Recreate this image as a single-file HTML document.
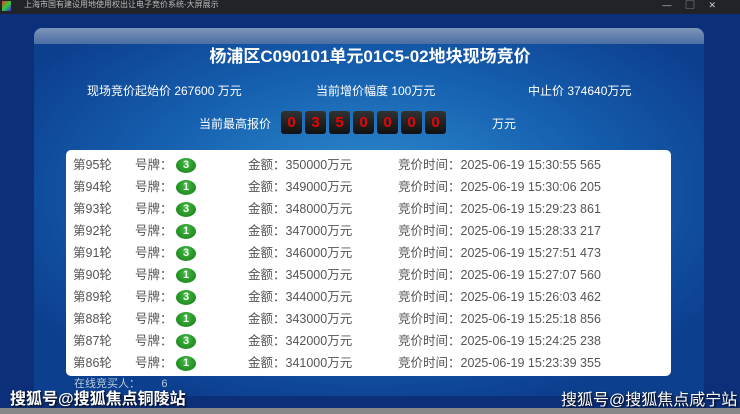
<!DOCTYPE html><html><head><meta charset="utf-8"><style>
*{margin:0;padding:0;box-sizing:border-box}
body{width:740px;height:414px;overflow:hidden;background:#0c2f7a;font-family:"Liberation Sans","Noto Sans CJK SC",sans-serif;position:relative}
.tb{position:absolute;left:0;top:0;width:740px;height:14px;background:#202428;color:#bbb;font-size:8px;line-height:10px;padding-left:24px}
.tb i{position:absolute;left:2px;top:1px;width:9px;height:10px;background:linear-gradient(135deg,#e33,#3c3,#33e)}
.panel{position:absolute;left:34px;top:28px;width:670px;height:368px;border-radius:8px 8px 0 0;background:radial-gradient(ellipse 60% 60% at 50% 45%,#2f8fd0,#1660b0 55%,#0d3f8f)}
.hd{position:absolute;left:34px;top:28px;width:670px;height:16px;border-radius:8px 8px 0 0;background:linear-gradient(#7d95b8,#4a6ea4)}
.t{position:absolute;color:#fff;white-space:nowrap}
.box{position:absolute;left:66px;top:150px;width:605px;height:226px;background:#fff;border-radius:5px}
.r{position:absolute;left:0;height:22px;width:605px;font-size:12.5px;color:#555;line-height:22px}
.r span{position:absolute}
.c{position:absolute;left:110px;top:4px;width:20px;height:15px;border-radius:50%;background:radial-gradient(circle at 50% 35%,#4b4,#137a13);color:#fff;font-weight:bold;font-size:11px;line-height:15px;text-align:center}
.d{display:inline-block;width:21px;height:23px;margin-right:3px;background:linear-gradient(#333,#111);border-radius:3px;color:#e00;font-size:15px;font-weight:bold;text-align:center;line-height:23px}
.bb{position:absolute;left:0;top:408px;width:740px;height:6px;background:#888}
.wm{position:absolute;color:#fff;font-size:16px;font-weight:bold;text-shadow:1px 1px 2px #000}
</style></head><body>
<div class="tb"><i></i>上海市国有建设用地使用权出让电子竞价系统-大屏展示<span style="position:absolute;right:10px;top:0;color:#ccc;font-size:9px;letter-spacing:14px">—▢✕</span></div>
<div class="panel"></div><div class="hd"></div>
<div class="t" style="left:0;width:740px;text-align:center;top:42px;font-size:17px;font-weight:bold">杨浦区C090101单元01C5-02地块现场竞价</div>
<div class="t" style="left:87px;top:82px;font-size:12px">现场竞价起始价 267600 万元</div>
<div class="t" style="left:316px;top:82px;font-size:12px">当前增价幅度 100万元</div>
<div class="t" style="left:528px;top:82px;font-size:12px">中止价 374640万元</div>
<div class="t" style="left:199px;top:115px;font-size:12px">当前最高报价</div>
<div class="t" style="left:281px;top:111px;font-size:0"><span class="d">0</span><span class="d">3</span><span class="d">5</span><span class="d">0</span><span class="d">0</span><span class="d">0</span><span class="d">0</span></div>
<div class="t" style="left:492px;top:115px;font-size:12px">万元</div>
<div class="box">
<div class="r" style="top:4px"><span style="left:7px">第95轮</span><span style="left:69px">号牌：</span><div class="c">3</div><span style="left:182px">金额：350000万元</span><span style="left:332px">竞价时间：2025-06-19 15:30:55 565</span></div>
<div class="r" style="top:26px"><span style="left:7px">第94轮</span><span style="left:69px">号牌：</span><div class="c">1</div><span style="left:182px">金额：349000万元</span><span style="left:332px">竞价时间：2025-06-19 15:30:06 205</span></div>
<div class="r" style="top:48px"><span style="left:7px">第93轮</span><span style="left:69px">号牌：</span><div class="c">3</div><span style="left:182px">金额：348000万元</span><span style="left:332px">竞价时间：2025-06-19 15:29:23 861</span></div>
<div class="r" style="top:70px"><span style="left:7px">第92轮</span><span style="left:69px">号牌：</span><div class="c">1</div><span style="left:182px">金额：347000万元</span><span style="left:332px">竞价时间：2025-06-19 15:28:33 217</span></div>
<div class="r" style="top:92px"><span style="left:7px">第91轮</span><span style="left:69px">号牌：</span><div class="c">3</div><span style="left:182px">金额：346000万元</span><span style="left:332px">竞价时间：2025-06-19 15:27:51 473</span></div>
<div class="r" style="top:114px"><span style="left:7px">第90轮</span><span style="left:69px">号牌：</span><div class="c">1</div><span style="left:182px">金额：345000万元</span><span style="left:332px">竞价时间：2025-06-19 15:27:07 560</span></div>
<div class="r" style="top:136px"><span style="left:7px">第89轮</span><span style="left:69px">号牌：</span><div class="c">3</div><span style="left:182px">金额：344000万元</span><span style="left:332px">竞价时间：2025-06-19 15:26:03 462</span></div>
<div class="r" style="top:158px"><span style="left:7px">第88轮</span><span style="left:69px">号牌：</span><div class="c">1</div><span style="left:182px">金额：343000万元</span><span style="left:332px">竞价时间：2025-06-19 15:25:18 856</span></div>
<div class="r" style="top:180px"><span style="left:7px">第87轮</span><span style="left:69px">号牌：</span><div class="c">3</div><span style="left:182px">金额：342000万元</span><span style="left:332px">竞价时间：2025-06-19 15:24:25 238</span></div>
<div class="r" style="top:202px"><span style="left:7px">第86轮</span><span style="left:69px">号牌：</span><div class="c">1</div><span style="left:182px">金额：341000万元</span><span style="left:332px">竞价时间：2025-06-19 15:23:39 355</span></div>
</div>
<div class="t" style="left:74px;top:375px;font-size:11px;color:#bcd">在线竞买人：&nbsp;&nbsp;&nbsp;&nbsp;&nbsp;&nbsp;&nbsp;6</div>
<div class="wm" style="left:10px;top:385px">搜狐号@搜狐焦点铜陵站</div>
<div class="wm" style="left:561px;top:386px;font-weight:normal">搜狐号@搜狐焦点咸宁站</div>
<div class="bb"></div>
</body></html>
